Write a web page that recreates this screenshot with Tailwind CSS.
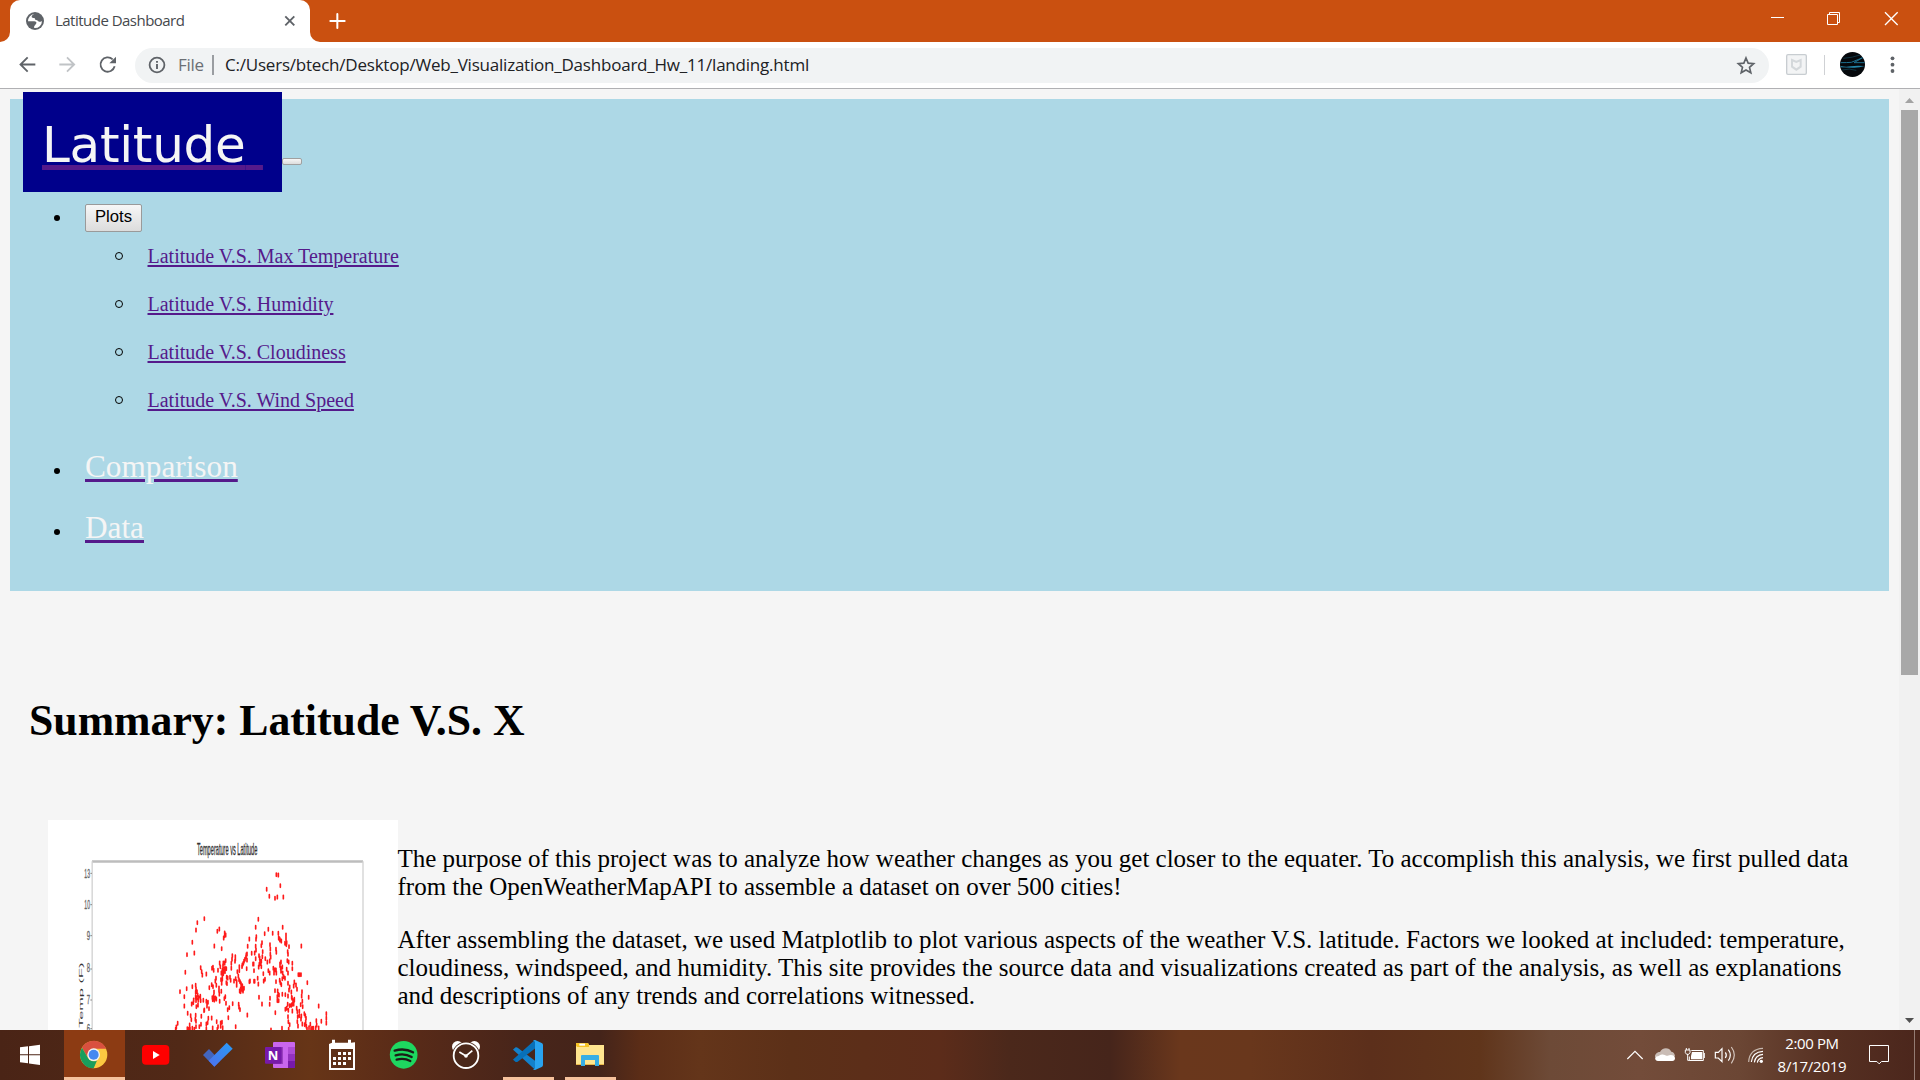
<!DOCTYPE html>
<html lang="en">
<head>
<meta charset="utf-8">
<title>Latitude Dashboard</title>
<script src="https://cdn.jsdelivr.net/npm/@tailwindcss/browser@4"></script>
</head>
<body class="w-[1920px] h-[1080px] overflow-hidden flex flex-col bg-[#f5f5f5]">

<!-- Tab strip -->
<header class="h-[42px] shrink-0 bg-[#ca5010] flex items-end">
  <svg class="w-[10px] h-[10px]" viewBox="0 0 10 10"><path d="M10 0A10 10 0 0 1 0 10H10Z" fill="#fff"/></svg>
  <div class="w-[300px] h-[42px] bg-white rounded-t-[10px] flex items-center">
    <svg class="w-[18px] h-[18px] ml-4 shrink-0" viewBox="78 36 54 54"><circle cx="105" cy="63" r="27" fill="#5f6368"/><path d="M103 42c-3 3-8 3-8 8 0 3 5 4 8 4 3 1 1 6 5 6 5 1 6 4 9 5 4 1 8-1 9-2a21 21 0 0 1-23 21c-2-2 0-6 2-8 2-3 5-5 4-9-1-3-5-3-9-3H84a21 21 0 0 1 19-22z" fill="#fff"/></svg>
    <div class="ml-[11px] w-[216px] pb-[2px] whitespace-nowrap font-['Open_Sans',sans-serif] text-[15px] leading-5 tracking-[-0.52px] text-[#45494d]">Latitude Dashboard</div>
    <svg class="w-[12px] h-[12px] shrink-0 ml-[13px]" viewBox="0 0 12 12"><path d="M1.3 1.3l9 9M10.3 1.3l-9 9" stroke="#5f6368" stroke-width="1.9"/></svg>
  </div>
  <svg class="w-[10px] h-[10px]" viewBox="0 0 10 10"><path d="M0 0A10 10 0 0 0 10 10H0Z" fill="#fff"/></svg>
  <svg class="w-[36px] h-[42px]" viewBox="960 0 108 126"><path d="M1012 42v42M991 63h43" stroke="#fff" stroke-width="6" stroke-linecap="round"/></svg>
  <svg class="ml-auto w-[160px] h-[42px]" viewBox="480 0 480 126" fill="none" stroke="#fff" stroke-width="3"><path d="M513 52.500h39M682.500 43.500h30v30h-30zM688.500 43.500v-6h30v30h-6"/><path d="M855 37l38 38M893 37l-38 38" stroke-width="4"/></svg>
</header>

<!-- Toolbar -->
<div class="h-[47px] shrink-0 bg-white border-b border-[#b0b0b3] flex items-center">
  <svg class="w-[135px] h-[46px] shrink-0" viewBox="0 126 405 138" fill="none" stroke-width="5.500">
    <path d="M106 193.500H62M83 172L61.500 193.500 83 215" stroke="#5f6368"/>
    <path d="M178 193.500h44M201 172l21.500 21.500L201 215" stroke="#c0c3c6"/>
    <path d="M344 199a21.500 21.500 0 1 1-6-21" stroke="#5f6368"/><path d="M348 170v20h-20z" fill="#5f6368"/>
  </svg>
  <div class="w-[1634px] h-[35px] rounded-full bg-[#f1f3f4] flex items-center font-['Open_Sans',sans-serif] text-[17px] leading-6 whitespace-nowrap">
    <svg class="w-[18px] h-[18px] ml-[13px] shrink-0" viewBox="0 0 18 18"><circle cx="9" cy="9" r="7.400" fill="none" stroke="#5f6368" stroke-width="1.800"/><path d="M9 8v5M9 5v1.800" stroke="#5f6368" stroke-width="1.900"/></svg>
    <span class="ml-[12px] w-[34px] text-[#6b6f74] tracking-[-0.3px]">File</span>
    <span class="w-[2px] h-5 bg-[#9a9da1]"></span>
    <span class="ml-[11px] text-[#202124] tracking-[-0.215px]">C:/Users/btech/Desktop/Web_Visualization_Dashboard_Hw_11/landing.html</span>
    <svg class="w-[20px] h-[20px] ml-auto mr-[13px] shrink-0" viewBox="409 163 60 60"><path d="M439 172l6.500 15.500 16.500 1.500-12.500 11 4 16.500-14.500-8.500-14.500 8.500 4-16.500L416 189l16.500-1.500z" fill="none" stroke="#5f6368" stroke-width="5"/></svg>
  </div>
  <svg class="w-[151px] h-[46px] shrink-0" viewBox="507 126 453 138">
    <rect x="560" y="164" width="59" height="59" rx="4" fill="#f3f4f5" stroke="#c8cdd1" stroke-width="4"/>
    <path d="M576 180l13 6 13-6v20l-13 9-13-9z" fill="none" stroke="#d4d8db" stroke-width="6"/>
    <path d="M673.500 165v60" stroke="#cfd1d4" stroke-width="3"/>
    <circle cx="757.500" cy="193.500" r="37.500" fill="#05080c"/>
    <path d="M722 188q18 0 32-1l34-14-26 15h32" fill="none" stroke="#1d6f8e" stroke-width="3"/><path d="M722 198q15 4 30 1t42-1q-18 6-36 5t-36-1z" fill="#2387ab"/><path d="M730 175q28-2 50-10M727 210q20-6 42 1" fill="none" stroke="#0f3442" stroke-width="3"/>
    <g fill="#5f6368"><circle cx="877.500" cy="175" r="5.700"/><circle cx="877.500" cy="194" r="5.700"/><circle cx="877.500" cy="213" r="5.700"/></g>
  </svg>
</div>

<!-- Page viewport -->
<div class="h-[941px] shrink-0 flex overflow-hidden bg-[#f5f5f5]">
  <main class="w-[1899px] h-full pt-[10px] pl-[10px] font-['Liberation_Serif',serif] text-black">
    <nav class="w-[1879px] h-[492px] bg-[#add8e6]">
      <div class="flex items-start ml-[13px]">
        <a class="-mt-[7px] block w-[259px] h-[100px] bg-[#00008b] pl-[19px] whitespace-nowrap font-['DejaVu_Sans',sans-serif] text-[50px] leading-[106px] tracking-[-0.28px] text-[#f5f5f5] underline decoration-[#551a8b] decoration-[5px] underline-offset-[3px] [text-decoration-skip-ink:none]">Latitude<span class="tracking-[1.5px]">&nbsp;</span></a>
        <span class="mt-[59px] w-[20px] h-[7px] rounded-[2px] border border-[#a0a0a0] bg-linear-to-b from-[#f6f6f6] to-[#dddddd]"></span>
      </div>
      <ul>
        <li>
          <div class="flex items-center pt-[12px]">
            <span class="ml-[44px] mr-[25px] w-[6px] h-[6px] rounded-full bg-black"></span>
            <button class="w-[57px] h-[28px] rounded-[2px] border border-[#9a9a9a] bg-linear-to-b from-[#f7f7f7] to-[#dcdcdc] font-['Liberation_Sans',sans-serif] text-[16.67px] leading-none pb-px">Plots</button>
          </div>
          <ul class="text-[20px] leading-[48px] text-[#551a8b]">
            <li class="flex items-center h-12"><span class="ml-[105px] mr-[24.5px] w-[8px] h-[8px] rounded-full border-[1.5px] border-black"></span><a class="underline decoration-2 underline-offset-[2px]">Latitude V.S. Max Temperature</a></li>
            <li class="flex items-center h-12"><span class="ml-[105px] mr-[24.5px] w-[8px] h-[8px] rounded-full border-[1.5px] border-black"></span><a class="underline decoration-2 underline-offset-[2px]">Latitude V.S. Humidity</a></li>
            <li class="flex items-center h-12"><span class="ml-[105px] mr-[24.5px] w-[8px] h-[8px] rounded-full border-[1.5px] border-black"></span><a class="underline decoration-2 underline-offset-[2px]">Latitude V.S. Cloudiness</a></li>
            <li class="flex items-center h-12"><span class="ml-[105px] mr-[24.5px] w-[8px] h-[8px] rounded-full border-[1.5px] border-black"></span><a class="underline decoration-2 underline-offset-[2px]">Latitude V.S. Wind Speed</a></li>
          </ul>
        </li>
        <li class="mt-3 flex items-center h-[61px] text-[31.25px] leading-[61px] text-[#f5f5f5]"><span class="ml-[44px] mr-[25px] mt-[9px] w-[6px] h-[6px] rounded-full bg-black"></span><a class="underline decoration-[3px] decoration-[#551a8b] underline-offset-[2px]">Comparison</a></li>
        <li class="flex items-center h-[61px] text-[31.25px] leading-[61px] text-[#f5f5f5]"><span class="ml-[44px] mr-[25px] mt-[9px] w-[6px] h-[6px] rounded-full bg-black"></span><a class="underline decoration-[3px] decoration-[#551a8b] underline-offset-[2px]">Data</a></li>
      </ul>
    </nav>
    <h1 class="mt-[104px] pl-[19px] text-[43.75px] leading-[50px] font-bold">Summary: Latitude V.S. X</h1>
    <section class="mt-[75px] pl-[38px] flex items-start">
      <svg class="w-[350px] h-[210px] bg-white shrink-0" viewBox="54 60 1050 630">
        <g font-family="Liberation Sans, sans-serif" fill="#333">
          <text x="501" y="166" font-size="47" textLength="181" lengthAdjust="spacingAndGlyphs" stroke="#333" stroke-width="1">Temperature vs Latitude</text>
          <g font-size="38" fill="#666" stroke="#666" stroke-width="1">
            <text x="163" y="234" textLength="17" lengthAdjust="spacingAndGlyphs">13</text><text x="163" y="327" textLength="17" lengthAdjust="spacingAndGlyphs">10</text>
            <text x="170" y="420" textLength="10" lengthAdjust="spacingAndGlyphs">9</text><text x="170" y="517" textLength="10" lengthAdjust="spacingAndGlyphs">8</text><text x="170" y="611" textLength="10" lengthAdjust="spacingAndGlyphs">7</text><text x="170" y="699" textLength="10" lengthAdjust="spacingAndGlyphs">6</text>
          </g>
          <text transform="translate(158 684) rotate(-90)" font-size="16" textLength="196" lengthAdjust="spacingAndGlyphs">Temp (F)</text>
        </g>
        <path d="M186 184.500H999" stroke="#bdbdbd" stroke-width="7"/>
        <path d="M186.500 184V700M999 184V700" stroke="#d2d2d2" stroke-width="4"/>
        <path d="M181 220h5M181 314h5M181 407h5M181 507h5M181 600h5M181 686h5" stroke="#888" stroke-width="3"/>
        <path id="dots" fill="none" stroke="#ff1a1a" stroke-width="5" stroke-linecap="round"/>
      </svg>
      <div class="w-[1462px] mt-[25px] -ml-[0.5px] text-[25px] leading-[28px]">
        <p>The purpose of this project was to analyze how weather changes as you get closer to the equater. To accomplish this analysis, we first pulled data<br>from the OpenWeatherMapAPI to assemble a dataset on over 500 cities!</p>
        <p class="mt-[25px]">After assembling the dataset, we used Matplotlib to plot various aspects of the weather V.S. latitude. Factors we looked at included: temperature,<br>cloudiness, windspeed, and humidity. This site provides the source data and visualizations created as part of the analysis, as well as explanations<br>and descriptions of any trends and correlations witnessed.</p>
      </div>
    </section>
  </main>
  <div class="w-[21px] h-full bg-[#f1f1f1] flex flex-col items-center">
    <svg class="w-[21px] h-[21px] shrink-0" viewBox="0 0 21 21"><path d="M6 14L10.500 9 15 14z" fill="#a3a3a3"/></svg>
    <div class="w-[17px] h-[565px] bg-[#a8a8a8]"></div>
    <svg class="w-[21px] h-[21px] mt-auto" viewBox="0 0 21 21"><path d="M6 9h9l-4.500 5z" fill="#505050"/></svg>
  </div>
</div>

<!-- Taskbar -->
<footer class="h-[50px] shrink-0 flex text-white bg-[linear-gradient(90deg,#4a2416_0px,#512917_180px,#673517_310px,#5a2b18_400px,#48251a_520px,#44241a_600px,#5b2d17_640px,#64351a_700px,#5c3018_790px,#5c2c1a_940px,#4b281b_1010px,#46251b_1110px,#6a371c_1180px,#69371c_1250px,#5c2f1b_1370px,#60351b_1480px,#6d4a37_1550px,#734c3a_1640px,#6b4634_1740px,#563022_1830px,#4b261c_1920px)]">
  <svg class="w-[63px] h-[50px]" viewBox="0 15 189 150"><path d="M60 67l24-3v24H60zM87 63.500l33-4V88H87zM60 91h24v24l-24-3.500zM87 91h33v29l-33-4.500z" fill="#fff"/></svg>
  <svg class="w-[62px] h-[50px]" viewBox="189 15 186 150">
    <rect x="192" y="15" width="183" height="150" fill="#8c3b13"/><rect x="192" y="156" width="183" height="9" fill="#f6c29d"/>
    <circle cx="281" cy="89" r="41" fill="#fcc941"/>
    <path d="M246 68A41 41 0 0 1 319 71H281A20 20 0 0 0 264 99z" fill="#d9503f"/>
    <path d="M246 68L264 99A20 20 0 0 0 291 106.500L281 130A41 41 0 0 1 246 68z" fill="#1a9e5c"/>
    <circle cx="281" cy="89" r="19" fill="#f3f3f3"/><circle cx="281" cy="89" r="15" fill="#4688f1"/>
  </svg>
  <svg class="w-[62px] h-[50px]" viewBox="375 15 186 150"><rect x="426" y="60" width="82" height="59" rx="12" fill="#f00"/><path d="M459 78l20 12-20 12z" fill="#fff"/></svg>
  <svg class="w-[62px] h-[50px]" viewBox="561 15 186 150">
    <defs><linearGradient id="todo" x1="0" y1="1" x2="1" y2="0"><stop offset="0" stop-color="#4f70ec"/><stop offset="1" stop-color="#279cf8"/></linearGradient></defs>
    <path d="M609 90l18-18 33 35-17 18z" fill="#4365bd"/><path d="M626 107l54-54 18 18-55 54z" fill="url(#todo)"/></svg>
  <svg class="w-[62px] h-[50px]" viewBox="747 15 186 150">
    <rect x="819" y="51" width="66" height="78" rx="3" fill="#c966ee"/><path d="M864 66h21v21h-21z" fill="#ae4bd5"/><path d="M864 87h21v21h-21z" fill="#9332bf"/><path d="M864 108h21v21h-21z" fill="#7719aa"/>
    <path d="M819 66h30v51h-30z" fill="#9a3fc0"/><rect x="795" y="66" width="50" height="50" rx="3" fill="#7719aa"/><text x="819" y="105" text-anchor="middle" font-size="39" font-weight="700" font-family="Open Sans, sans-serif" fill="#fff">N</text></svg>
  <svg class="w-[62px] h-[50px]" viewBox="3 15 186 150">
    <path d="M57 57l9-4v-9h9v9h39v-9h9v9l12-1v83H57z" fill="#fff"/><path d="M63 72h66v57H63z" fill="#5f3018"/>
    <g fill="#fff"><path d="M84 81h9v9h-9zM99 81h9v9h-9zM114 81h9v9h-9zM69 96h9v9h-9zM84 96h9v9h-9zM99 96h9v9h-9zM114 96h9v9h-9zM69 111h9v9h-9zM84 111h9v9h-9zM99 111h9v9h-9z"/></g></svg>
  <svg class="w-[62px] h-[50px]" viewBox="189 15 186 150"><circle cx="281" cy="89.500" r="41.500" fill="#1ed760"/><path d="M254 77q30-9 55 5M257 91q26-8 48 5M260 104q22-6 41 4" fill="none" stroke="#1b1b17" stroke-width="7" stroke-linecap="round"/></svg>
  <svg class="w-[62px] h-[50px]" viewBox="375 15 186 150">
    <circle cx="443" cy="65" r="17" fill="#fff"/><circle cx="493" cy="65" r="17" fill="#fff"/><circle cx="468" cy="92" r="42" fill="#4b281a"/><circle cx="468" cy="92" r="37" fill="#4b281a" stroke="#fff" stroke-width="5.500"/>
    <path d="M448 81l20 12 19-16" fill="none" stroke="#fff" stroke-width="5"/><circle cx="468" cy="93" r="5.500" fill="#fff"/></svg>
  <svg class="w-[62px] h-[50px]" viewBox="561 15 186 150">
    <rect x="579" y="156" width="153" height="9" fill="#f6c29d"/>
    <path d="M610 73l7-6q3-1 6 1l53 40v25l-4-2-61-55q-3-2-1-3z" fill="#1381cb"/><path d="M610 105l7 6q3 1 6-1l53-40V45l-4 2-61 55q-3 1-1 3z" fill="#0870b8"/>
    <path d="M675 45l20 9q4 2 4 6v60q0 4-4 6l-20 9q-4 0-6-3 6 1 6-4V52q0-5-6-4 2-3 6-3z" fill="#29a3ef"/></svg>
  <svg class="w-[62px] h-[50px]" viewBox="747 15 186 150">
    <rect x="765" y="156" width="153" height="9" fill="#f6c29d"/>
    <path d="M798 54h36l3 6h45v60h-84z" fill="#ffe58f"/><path d="M798 54h36l3 6v6h-36l-3-5z" fill="#f7c325"/><path d="M808 56h17v6h-17z" fill="#fff"/><path d="M798 117h84v3h-84z" fill="#e8b84a"/>
    <path d="M813 123V93q0-3 3-3h48q3 0 3 3v30h-12v-18h-30v18z" fill="#37aee5"/></svg>

  <div class="ml-auto flex h-[50px]">
    <svg class="w-[30px] h-[50px]" viewBox="60 120 90 150"><path d="M82 207l23-23 23 23" fill="none" stroke="#fff" stroke-width="3.500"/></svg>
    <svg class="w-[30px] h-[50px]" viewBox="150 120 90 150"><path d="M165 201c-1-9 8-16 15-15 5-14 28-16 34-1 8 1 11 8 11 14z" fill="#c9bcb5"/><path d="M174 213c-10 0-12-13-1-14 6-1 8-8 18-5 6 1 9 4 12 3 9-4 22-2 22 8 0 5-3 8-8 8z" fill="#fff"/></svg>
    <svg class="w-[30px] h-[50px]" viewBox="240 120 90 150"><path d="M274 181.500h36v30h-42v-12M313 189v15" fill="none" stroke="#fff" stroke-width="3"/><path d="M276 186h31v22h-34v-10z" fill="#fff"/><path d="M259 174v6M267 174v6M263 192v19h6" fill="none" stroke="#fff" stroke-width="3"/><path d="M256 180h14v8l-4 5h-6l-4-5z" fill="none" stroke="#fff" stroke-width="3"/></svg>
    <svg class="w-[30px] h-[50px]" viewBox="330 120 90 150" fill="none" stroke="#fff" stroke-width="3.500"><path d="M346 187h9l11-11v39l-11-11h-9z"/><path d="M376 187q6 8 0 17"/><path d="M385 179q12 16 0 33"/><path d="M394 171q18 24 0 49" stroke="#d6c8c0"/></svg>
    <svg class="w-[30px] h-[50px]" viewBox="420 120 90 150" fill="none" stroke="#fff" stroke-width="3.500"><path d="M446 216q2-39 43-41" stroke="#c7b8af"/><path d="M454 216q3-30 35-32"/><path d="M463 217q3-22 26-24"/><path d="M472 218q2-13 17-15"/><circle cx="484" cy="214" r="5" fill="#fff" stroke="none"/></svg>
    <div class="w-[85px] flex flex-col items-center pt-[2px] pr-px font-['Open_Sans',sans-serif] text-[15px] leading-[23px] tracking-[-0.4px] whitespace-nowrap"><span>2:00 PM</span><span class="tracking-[-0.25px]">8/17/2019</span></div>
    <svg class="w-[59px] h-[50px]" viewBox="765 120 177 150"><path d="M808.500 166.500h57v48h-21l-7 7-7-7h-22z" fill="none" stroke="#fff" stroke-width="3"/></svg>
    <span class="w-px h-full bg-[#947c74]"></span><span class="w-[5px]"></span>
  </div>
</footer>

<script>
  // Scatter points of the temperature plot, as x,y pairs
  const pts = "739,224 745,225 751,257 710,268 718,289 735,295 742,291 760,291 523,356 502,368 498,390 568,387 562,394 584,399 587,405 581,414 584,407 487,427 553,438 575,446 471,464 493,459 466,517 512,503 515,515 517,525 529,522 685,358 677,382 715,388 704,401 728,400 758,382 679,410 678,418 658,417 653,439 696,428 694,437 745,400 746,414 750,420 754,423 749,417 768,405 768,416 765,430 769,434 770,428 777,440 773,455 774,463 814,438 720,434 721,447 738,448 739,457 677,439 678,450 674,459 665,460 651,462 648,470 649,464 645,478 642,484 640,490 637,495 636,500 607,467 606,478 616,470 615,484 616,477 587,482 589,506 569,489 571,500 579,497 580,489 584,489 604,490 604,505 549,502 551,511 546,505 564,511 574,519 577,511 580,521 582,509 585,515 577,525 585,505 628,500 628,512 622,515 625,528 650,506 651,480 687,467 689,474 690,484 692,491 694,500 688,493 686,501 694,484 697,470 698,455 706,476 712,486 722,471 721,463 719,483 715,512 719,519 700,521 705,538 701,543 683,535 685,552 672,512 671,492 669,492 658,545 660,543 672,544 674,544 677,476 730,505 735,509 739,519 732,519 738,510 750,497 752,505 753,514 750,492 753,486 757,501 758,519 765,535 761,530 757,536 751,548 749,541 754,554 738,545 770,508 774,519 772,482 776,486 787,490 787,506 809,524 813,524 805,524 832,548 774,550 779,561 777,570 793,546 791,558 798,555 801,568 816,575 836,592 630,545 627,539 633,551 637,557 640,567 637,569 634,564 642,565 639,573 632,566 629,573 632,575 620,545 617,536 620,556 612,543 600,532 602,541 590,532 589,548 591,551 593,534 577,537 575,550 573,539 558,535 556,543 559,556 549,560 552,576 545,554 538,563 567,564 567,572 568,582 574,574 487,560 497,556 498,566 497,577 470,566 450,575 463,590 463,618 473,640 501,575 503,585 511,589 512,602 520,601 506,593 500,594 497,591 498,602 490,608 485,612 491,600 505,600 529,604 534,607 531,618 537,626 523,630 522,632 514,649 504,615 499,620 547,593 551,589 553,600 556,594 548,599 559,597 569,604 586,590 588,610 583,596 608,611 626,613 627,621 630,629 593,629 598,623 595,653 652,645 687,592 696,612 719,613 736,638 735,572 743,573 745,583 742,590 747,585 757,583 742,602 746,602 720,595 766,584 774,588 784,576 785,592 789,602 793,598 790,606 787,613 786,594 784,616 779,617 773,613 770,625 766,628 775,631 787,633 791,612 793,600 800,625 802,635 808,634 808,647 812,614 815,588 817,604 818,620 814,648 813,657 823,641 826,647 828,655 827,666 824,674 817,672 804,678 802,665 774,650 803,650 866,618 889,641 889,655 889,669 874,664 859,662 860,675 857,684 866,684 841,673 846,685 850,685 843,688 837,683 831,687 829,679 756,685 776,688 779,674 775,665 576,667 572,669 572,679 564,680 560,665 578,683 548,684 562,688 617,680 497,646 496,658 498,664 484,659 482,647 498,680 493,688 487,685 479,675 480,687 513,673 508,680 529,672 533,668 529,687 545,654 443,670 439,681 437,688 477,687 472,686 723,690 535,655";
  document.getElementById("dots").setAttribute("d", pts.split(" ").map(p => {
    const [x, y] = p.split(",");
    return "M" + x + " " + (y - 5) + "v10";
  }).join(""));
</script>
</body>
</html>
